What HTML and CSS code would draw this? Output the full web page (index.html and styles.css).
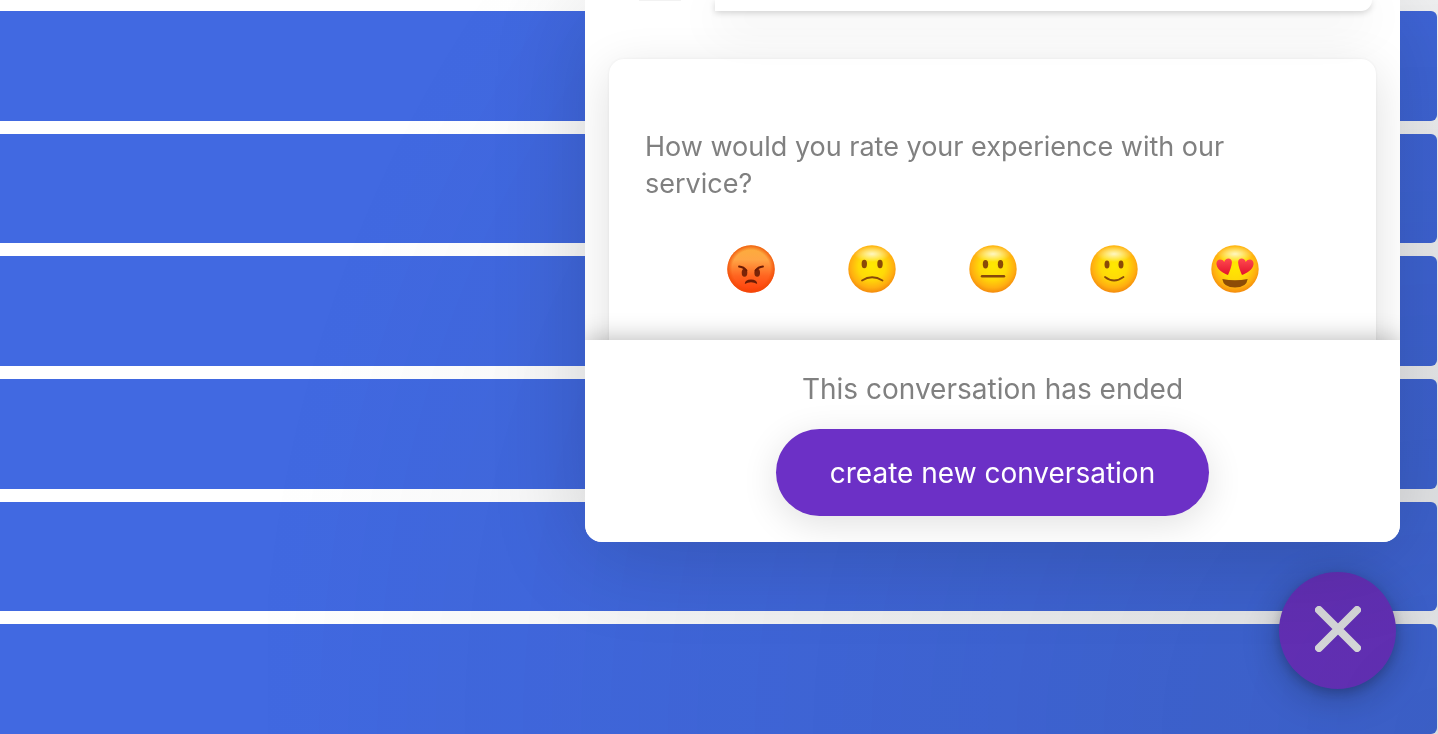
FILE: index.html
```html
<!DOCTYPE html>
<html lang="en">
<head>
    <meta charset="UTF-8">
    <meta name="viewport" content="width=device-width, initial-scale=1.0">
    <title>Chat</title>
    <link rel="stylesheet" href="styles.css">
</head>
<body>
    <!-- page behind the chat -->
    <main class="rows">
        <div class="row"></div>
        <div class="row"></div>
        <div class="row"></div>
        <div class="row"></div>
        <div class="row"></div>
        <div class="row"></div>
    </main>

    <section class="chat">
        <div class="messages">
            <div class="message">
                <div class="avatar"></div>
                <div class="bubble"></div>
            </div>

            <div class="rating">
                <p class="question">How would you rate your experience with our service?</p>
                <div class="faces">
                    <button class="face" type="button" aria-label="Terrible">
                        <svg viewBox="0 0 48 48">
                            <defs>
                                <linearGradient id="red" x1="0" y1="0" x2="0" y2="1">
                                    <stop offset="0" stop-color="#fbae3b"/>
                                    <stop offset=".3" stop-color="#ffa545"/>
                                    <stop offset=".65" stop-color="#ff6420"/>
                                    <stop offset="1" stop-color="#ff3d0a"/>
                                </linearGradient>
                                <radialGradient id="redEdge">
                                    <stop offset=".8" stop-color="#f04a00" stop-opacity="0"/>
                                    <stop offset="1" stop-color="#ee4b08" stop-opacity=".8"/>
                                </radialGradient>
                                <radialGradient id="yellow" cx=".5" cy=".44" r=".57">
                                    <stop offset="0" stop-color="#ffe900"/>
                                    <stop offset=".5" stop-color="#ffd908"/>
                                    <stop offset=".8" stop-color="#ffaf10"/>
                                    <stop offset="1" stop-color="#f3870c"/>
                                </radialGradient>
                                <radialGradient id="shine">
                                    <stop offset="0" stop-color="#fff" stop-opacity=".75"/>
                                    <stop offset="1" stop-color="#fff" stop-opacity="0"/>
                                </radialGradient>
                                <linearGradient id="heart" x1="0" y1="0" x2="0" y2="1">
                                    <stop offset="0" stop-color="#ff4a50"/>
                                    <stop offset="1" stop-color="#e3122c"/>
                                </linearGradient>
                            </defs>
                            <circle cx="24" cy="24" r="23.7" fill="url(#red)"/>
                            <circle cx="24" cy="24" r="23.7" fill="url(#redEdge)"/>
                            <ellipse cx="17.5" cy="27.8" rx="2.8" ry="4" fill="#7a2408"/>
                            <ellipse cx="30.2" cy="27.8" rx="2.8" ry="4" fill="#7a2408"/>
                            <path d="M12 21.5q5 .5 7.5 4M36 21.5q-5 .5-7.5 4" fill="none" stroke="#6b1c05" stroke-width="1.8" stroke-linecap="round"/>
                            <path d="M17.8 39q0-4.5 6.2-4.5t6.2 4.5q-2.8-1.7-6.2-1.7t-6.2 1.7z" fill="#6b1c05"/>
                        </svg>
                    </button>
                    <button class="face" type="button" aria-label="Bad">
                        <svg viewBox="0 0 48 48">
                            <circle cx="24" cy="24" r="23.7" fill="url(#yellow)"/>
                            <ellipse cx="24" cy="9" rx="18" ry="8" fill="url(#shine)"/>
                            <ellipse cx="16.3" cy="19" rx="2.7" ry="4.2" fill="#8a4a08"/>
                            <ellipse cx="32" cy="19" rx="2.7" ry="4.2" fill="#8a4a08"/>
                            <path d="M14 35.5q10-6.5 20.5 0" fill="none" stroke="#87480a" stroke-width="1.8" stroke-linecap="round"/>
                        </svg>
                    </button>
                    <button class="face" type="button" aria-label="Okay">
                        <svg viewBox="0 0 48 48">
                            <circle cx="24" cy="24" r="23.7" fill="url(#yellow)"/>
                            <ellipse cx="24" cy="9" rx="18" ry="8" fill="url(#shine)"/>
                            <ellipse cx="16.5" cy="19.3" rx="2.7" ry="4.2" fill="#8a4a08"/>
                            <ellipse cx="31.5" cy="19.3" rx="2.7" ry="4.2" fill="#8a4a08"/>
                            <path d="M13 31.3h22" stroke="#87480a" stroke-width="2.4" stroke-linecap="round"/>
                        </svg>
                    </button>
                    <button class="face" type="button" aria-label="Good">
                        <svg viewBox="0 0 48 48">
                            <circle cx="24" cy="24" r="23.7" fill="url(#yellow)"/>
                            <ellipse cx="24" cy="9" rx="18" ry="8" fill="url(#shine)"/>
                            <ellipse cx="17" cy="19.5" rx="2.5" ry="3.9" fill="#8a4a08"/>
                            <ellipse cx="31" cy="19.5" rx="2.5" ry="3.9" fill="#8a4a08"/>
                            <path d="M15 32q9 7 18.5 0" fill="none" stroke="#87480a" stroke-width="1.8" stroke-linecap="round"/>
                        </svg>
                    </button>
                    <button class="face" type="button" aria-label="Great">
                        <svg viewBox="0 0 48 48">
                            <circle cx="24" cy="24" r="23.7" fill="url(#yellow)"/>
                            <ellipse cx="24" cy="9" rx="18" ry="8" fill="url(#shine)"/>
                            <path d="M17 30C12 28 6.5 25 5.5 19.5c-.8-4.8 5-7 7.7-2.5 1-5 8-4.8 7.7.5-.2 4-2.2 8.5-3.9 12.5z" fill="url(#heart)"/>
                            <path d="M31 30c5-2 10.5-5 11.5-10.5.8-4.8-5-7-7.7-2.5-1-5-8-4.8-7.7.5.2 4 2.200 8.500 3.900 12.500z" fill="url(#heart)"/>
                            <path d="M11.3 34q12.7 2.5 25.4 0-1.2 8.6-12.7 8.600t-12.700-8.600z" fill="#8d4c06"/>
                        </svg>
                    </button>
                </div>
            </div>
        </div>

        <footer class="ended">
            <p class="ended-text">This conversation has ended</p>
            <button class="new-chat" type="button">create new conversation</button>
        </footer>
    </section>

    <button class="launcher" type="button" aria-label="Close chat">
        <svg viewBox="0 0 46 46">
            <path d="M4 4l38 38M42 4L4 42" stroke="#f2f2f2" stroke-width="8" stroke-linecap="round"/>
        </svg>
    </button>
    <div class="shade"></div>
</body>
</html>
```
FILE: styles.css
```css
* {
    box-sizing: border-box;
}

body {
    margin: 0;
    background: #fff;
    font-family: Inter, "Liberation Sans", sans-serif;
    font-size: 28px;
    overflow: hidden;
}

p {
    margin: 0;
}

button {
    border: none;
    padding: 0;
    font: inherit;
    cursor: pointer;
}

/* Blue rows */
.rows {
    display: grid;
    grid-auto-rows: 1fr;
    gap: 13px;
    height: 100vh;
    padding: 11px 1px 0 0;
}

.row {
    background-color: royalblue;
    border-radius: 0 6px 6px 0;
}

/* Chat window */
.chat {
    position: fixed;
    top: 0;
    right: 38px;
    bottom: 192px;
    z-index: 2;
    display: flex;
    flex-direction: column;
    width: 815px;
    max-width: calc(100% - 76px);
    background-color: #fff;
    border-radius: 0 0 17px 17px;
    box-shadow: 0 12px 96px rgba(0, 0, 0, 0.16);
    overflow: hidden;
}

.messages {
    flex: 1;
    min-height: 0;
    padding: 0 24px;
}

.message {
    display: flex;
    gap: 34px;
    height: 11px;
    margin-bottom: 48px;
    padding: 0 4px 0 30px;
}

.avatar {
    width: 42px;
    height: 1px;
    background-color: #f2f2f2;
}

.bubble {
    flex: 1;
    border-radius: 0 0 12px 0;
    box-shadow: 0 2px 6px rgba(0, 0, 0, 0.16), 0 12px 48px rgba(0, 0, 0, 0.14);
}

.rating {
    min-height: 320px;
    padding: 69px 36px 0;
    background-color: #fff;
    border-radius: 15px;
    box-shadow: 0 0 3px rgba(0, 0, 0, 0.06), 0 12px 48px rgba(0, 0, 0, 0.13);
}

.question {
    padding-right: 36px;
    color: #808080;
    font-size: 27px;
    line-height: 37px;
}

.faces {
    display: flex;
    justify-content: center;
    gap: 73px;
    margin-top: 43px;
}

.face {
    width: 48px;
    height: 48px;
    background: none;
}

.face svg {
    display: block;
}

.ended {
    position: relative;
    display: flex;
    flex-direction: column;
    align-items: center;
    gap: 21px;
    padding: 31px 24px 26px;
    background-color: #fff;
    box-shadow: 0 0 24px rgba(0, 0, 0, 0.3);
}

.ended-text {
    color: #808080;
    line-height: 37px;
}

.new-chat {
    padding: 26px 54px 24px;
    color: #fff;
    background-color: #6c30c6;
    border-radius: 44px;
    line-height: 37px;
    box-shadow: 0 8px 36px rgba(0, 0, 0, 0.12);
}

/* Round button bottom right */
.launcher {
    position: fixed;
    right: 42px;
    bottom: 45px;
    z-index: 1;
    display: flex;
    justify-content: center;
    align-items: center;
    width: 117px;
    height: 117px;
    padding-bottom: 4px;
    background-color: #6c30c6;
    border-radius: 50%;
    box-shadow: 0 4px 12px rgba(0, 0, 0, 0.2), 0 8px 36px rgba(0, 0, 0, 0.25);
}

.launcher svg {
    width: 46px;
    height: 46px;
}

.shade {
    position: fixed;
    right: 0;
    bottom: 0;
    z-index: 1;
    width: 1170px;
    height: 1250px;
    background: radial-gradient(ellipse at bottom right, rgba(29, 39, 54, 0.16) 0, rgba(29, 39, 54, 0) 72%);
    pointer-events: none;
}
```
